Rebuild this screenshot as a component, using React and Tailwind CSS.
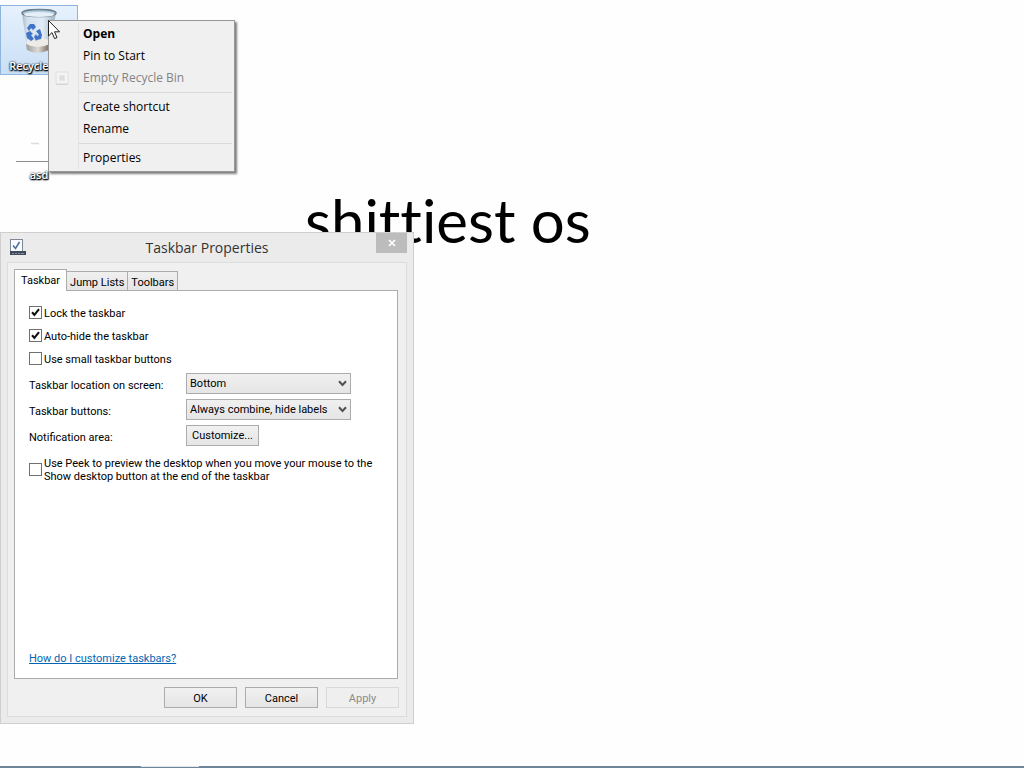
import { useState } from 'react';

const tabs = ['Taskbar', 'Jump Lists', 'Toolbars'];

function RecycleBinIcon() {
  return (
    <svg width="48" height="48" viewBox="0 0 48 48" className="block">
      <defs>
        <linearGradient id="glass" x1="0" x2="1" y1="0" y2="0">
          <stop offset="0" stopColor="#a3b4c3" />
          <stop offset="0.15" stopColor="#d3e0ec" />
          <stop offset="0.6" stopColor="#e1ecf6" />
          <stop offset="1" stopColor="#9fb1c0" />
        </linearGradient>
        <linearGradient id="base" x1="0" x2="1" y1="0" y2="0">
          <stop offset="0" stopColor="#9a9c9b" />
          <stop offset="0.5" stopColor="#dedbd6" />
          <stop offset="1" stopColor="#6f6257" />
        </linearGradient>
      </defs>
      <path d="M7 7 L12 42 Q21 49 34 43 L41 7 Z" fill="url(#glass)" />
      <path d="M12 34 L20 31 L35 34 L34 39 Q22 45 12 39 Z" fill="#eeebe7" />
      <path d="M11 38 Q22 44 35 38 L34 44 Q22 50 12 44 Z" fill="url(#base)" />
      <ellipse cx="24" cy="7" rx="17" ry="3.5" fill="#b4ccdc" stroke="#6d7f8c" strokeWidth="1.5" />
      <ellipse cx="24" cy="8.5" rx="15" ry="2.5" fill="#e4eff8" />
      <g fill="#3f74c9">
        <path d="M12 22 L15 18 L19 18 L21 21 L18 24 L16 22 L14 25 Z" />
        <path d="M11 27 L15 25 L18 28 L16 29 L19 33 L16 35 L12 32 Z" />
        <path d="M19 31 L21 28 L22 30 L24 29 L21 25 L25 23 L27 29 L26 33 L22 34 L21 35 Z" />
      </g>
    </svg>
  );
}

function TaskbarIcon() {
  return (
    <svg width="17" height="16" viewBox="0 0 17 16" className="block">
      <rect x="0.5" y="0.5" width="12" height="13" fill="#fafcff" stroke="#7e8794" />
      <path d="M3 6.5 L5.5 9.5 L9.5 3" fill="none" stroke="#536f9b" strokeWidth="1.6" />
      <rect x="0" y="12" width="16" height="4" fill="#3f4a5a" />
      <path d="M2 14.5h2M5 14.5h2M8 14.5h2M11 14.5h3" stroke="#8792a3" />
    </svg>
  );
}

function Checkbox({ checked, onChange }) {
  return (
    <span className="grid shrink-0">
      <input
        type="checkbox"
        checked={checked}
        onChange={onChange}
        className="peer col-start-1 row-start-1 w-[13px] h-[13px] appearance-none border border-[#707070] bg-white"
      />
      <svg
        width="13"
        height="13"
        viewBox="0 0 13 13"
        className="pointer-events-none invisible col-start-1 row-start-1 peer-checked:visible"
      >
        <path d="M3 6.2 L5.4 8.8 L10 3.2" fill="none" stroke="#111" strokeWidth="2.1" />
      </svg>
    </span>
  );
}

function Option({ children, defaultChecked = false }) {
  const [checked, setChecked] = useState(defaultChecked);
  return (
    <label className="flex min-h-[23px] items-center gap-[2px]">
      <Checkbox checked={checked} onChange={() => setChecked(!checked)} />
      <span className="pt-[2px] whitespace-nowrap">{children}</span>
    </label>
  );
}

function SelectRow({ id, label, options }) {
  return (
    <div className="flex items-center h-[26px]">
      <label htmlFor={id} className="w-[157px] pt-1">{label}</label>
      <span className="grid w-[165px]">
        <select
          id={id}
          className="col-start-1 row-start-1 h-[21px] appearance-none border border-[#acacac] bg-linear-to-b from-[#f0f0f0] to-[#e5e5e5] px-[3px] pt-px"
        >
          {options.map(o => <option key={o}>{o}</option>)}
        </select>
        <svg
          width="9"
          height="7"
          viewBox="0 0 9 7"
          className="pointer-events-none col-start-1 row-start-1 mr-1 self-center justify-self-end"
        >
          <path d="M1 1.2 L4.5 5 L8 1.2" fill="none" stroke="#505050" strokeWidth="2" />
        </svg>
      </span>
    </div>
  );
}

function DialogButton({ children, disabled = false }) {
  return (
    <button
      disabled={disabled}
      className="w-[73px] h-[21px] border border-[#acacac] bg-linear-to-b from-[#f1f1f1] to-[#e5e5e5] pt-px text-center disabled:border-[#d9d9d9] disabled:from-[#efefef] disabled:to-[#efefef] disabled:text-[#8b8b8b]"
    >
      {children}
    </button>
  );
}

function TaskbarProperties() {
  const [active, setActive] = useState('Taskbar');

  return (
    <section className="absolute left-0 top-[232px] w-[414px] border border-[#cfcfcf] bg-[#ebebeb] px-[6px] pb-[6px] font-['Roboto',sans-serif] text-[11px] leading-[13px] text-black">
      <header className="flex h-[29px] items-start justify-between">
        <span className="w-[31px] pl-[3px] pt-[6px]"><TaskbarIcon /></span>
        <h1 className="pt-[5px] font-['Open_Sans',sans-serif] text-[14px] leading-5 text-[#333]">Taskbar Properties</h1>
        <button aria-label="Close" className="flex h-5 w-[31px] items-center justify-center bg-[#bcbcbc]">
          <svg width="8" height="8" viewBox="0 0 8 8">
            <path d="M1 1 L7 7 M7 1 L1 7" stroke="#fff" strokeWidth="1.7" />
          </svg>
        </button>
      </header>

      <div className="border border-[#dcdcdc] bg-[#f0f0f0] pb-2 pl-[6px] pr-[7px] pt-[6px]">
        <div role="tablist" className="flex items-end">
          {tabs.map(tab => (
            <button
              key={tab}
              role="tab"
              aria-selected={active === tab}
              onClick={() => setActive(tab)}
              className={
                active === tab
                  ? 'relative z-10 -mb-px h-[22px] border border-b-0 border-[#acacac] bg-white px-[6px]'
                  : 'h-[19px] border border-b-0 border-l-0 border-[#acacac] bg-linear-to-b from-[#f0f0f0] to-[#e5e5e5] px-[3px] pt-[2px]'
              }
            >
              {tab}
            </button>
          ))}
        </div>

        <div role="tabpanel" className="mr-px flex h-[389px] flex-col border border-[#acacac] bg-white px-[14px] pb-[13px] pt-[10px]">
          <Option defaultChecked>Lock the taskbar</Option>
          <Option defaultChecked>Auto-hide the taskbar</Option>
          <Option>Use small taskbar buttons</Option>
          <SelectRow id="location" label="Taskbar location on screen:" options={['Bottom', 'Left', 'Right', 'Top']} />
          <SelectRow
            id="combine"
            label="Taskbar buttons:"
            options={['Always combine, hide labels', 'Combine when taskbar is full', 'Never combine']}
          />
          <div className="flex h-[26px] items-center">
            <span className="w-[157px] pt-1">Notification area:</span>
            <DialogButton>Customize...</DialogButton>
          </div>
          <div className="mt-[7px]">
            <Option>
              Use Peek to preview the desktop when you move your mouse to the
              <br />
              Show desktop button at the end of the taskbar
            </Option>
          </div>
          <a href="#help" className="mt-auto self-start text-[#0066b3] underline">How do I customize taskbars?</a>
        </div>

        <div className="mt-2 flex justify-end gap-2">
          <DialogButton>OK</DialogButton>
          <DialogButton>Cancel</DialogButton>
          <DialogButton disabled>Apply</DialogButton>
        </div>
      </div>
    </section>
  );
}

function MenuItem({ children, icon, bold = false, disabled = false }) {
  return (
    <button
      role="menuitem"
      disabled={disabled}
      className={`flex h-[22px] w-full items-center text-left disabled:text-[#838383] ${bold ? 'font-bold' : ''}`}
    >
      <span className="flex w-8 justify-center pr-[10px]">{icon}</span>
      {children}
    </button>
  );
}

function Separator() {
  return <div role="separator" className="my-[3px] ml-7 h-px bg-[#dadada]" />;
}

function ContextMenu() {
  return (
    <div
      role="menu"
      className="absolute left-12 top-5 w-[187px] border border-[#979797] bg-[#f0f0f0] p-[2px] font-['Open_Sans',sans-serif] text-[12px] leading-4 text-black shadow-[2px_2px_2px_rgba(0,0,0,0.5)]"
    >
      <div className="bg-linear-to-r from-[#e2e3e3] to-[#e2e3e3] bg-[length:1px_100%] bg-[position:27px_0] bg-no-repeat">
        <MenuItem bold>Open</MenuItem>
        <MenuItem>Pin to Start</MenuItem>
        <MenuItem
          disabled
          icon={
            <svg width="14" height="14" viewBox="0 0 14 14">
              <rect x="1" y="1" width="12" height="12" rx="1" fill="#f4f4f4" stroke="#dedede" />
              <rect x="4.5" y="4.5" width="5" height="5" fill="#dedede" stroke="#e6e6e6" />
              <path d="M1 13.3h12" stroke="#d0d0d0" />
            </svg>
          }
        >
          Empty Recycle Bin
        </MenuItem>
        <Separator />
        <MenuItem>Create shortcut</MenuItem>
        <MenuItem>Rename</MenuItem>
        <Separator />
        <MenuItem>Properties</MenuItem>
      </div>
    </div>
  );
}

export default function App() {
  return (
    <main className="relative min-h-screen overflow-hidden bg-[#fefefe]">
      {/* desktop */}
      <div className="absolute left-0 top-[5px] flex h-[70px] w-[78px] flex-col items-center border border-[#8fb5dd] bg-linear-to-b from-[#e6f1fc] to-[#c9dff6]">
        <RecycleBinIcon />
        <span className="mt-1 font-['Open_Sans',sans-serif] text-[11px] leading-4 font-semibold whitespace-nowrap text-white [text-shadow:0_0_2px_#000,0_1px_2px_#000,1px_1px_1px_#000]">
          Recycle Bin
        </span>
      </div>
      <div className="absolute left-0 top-[114px] flex w-[78px] flex-col items-center">
        <svg width="46" height="49" viewBox="0 0 46 49">
          <path d="M15 29.5h8" stroke="#dcdcdc" strokeWidth="1.5" />
          <path d="M0 47.5h46" stroke="#8c8c8c" />
        </svg>
        <span className="mt-1 font-['Open_Sans',sans-serif] text-[11px] leading-4 font-semibold text-white [text-shadow:0_0_2px_#000,0_1px_2px_#000,1px_1px_1px_#000]">
          asd
        </span>
      </div>
      <p className="absolute left-[305px] top-[188px] font-['Lato',sans-serif] text-[60px] leading-[64px] whitespace-nowrap text-black [font-variant-ligatures:none]">
        shittiest os
      </p>

      <TaskbarProperties />
      <ContextMenu />

      {/* mouse pointer */}
      <svg width="13" height="20" viewBox="0 0 13 20" className="absolute left-12 top-5">
        <path d="M0.5 0.5 V16 L4 12.6 L6.6 18.6 L9 17.6 L6.5 11.8 H11.6 Z" fill="#fff" stroke="#222" />
      </svg>

      {/* auto-hidden taskbar edge */}
      <footer className="absolute inset-x-0 bottom-0 flex h-[2px] bg-[#6f8598]">
        <span className="ml-[141px] h-px w-[58px] bg-[#dfe5ea]" />
      </footer>
    </main>
  );
}
